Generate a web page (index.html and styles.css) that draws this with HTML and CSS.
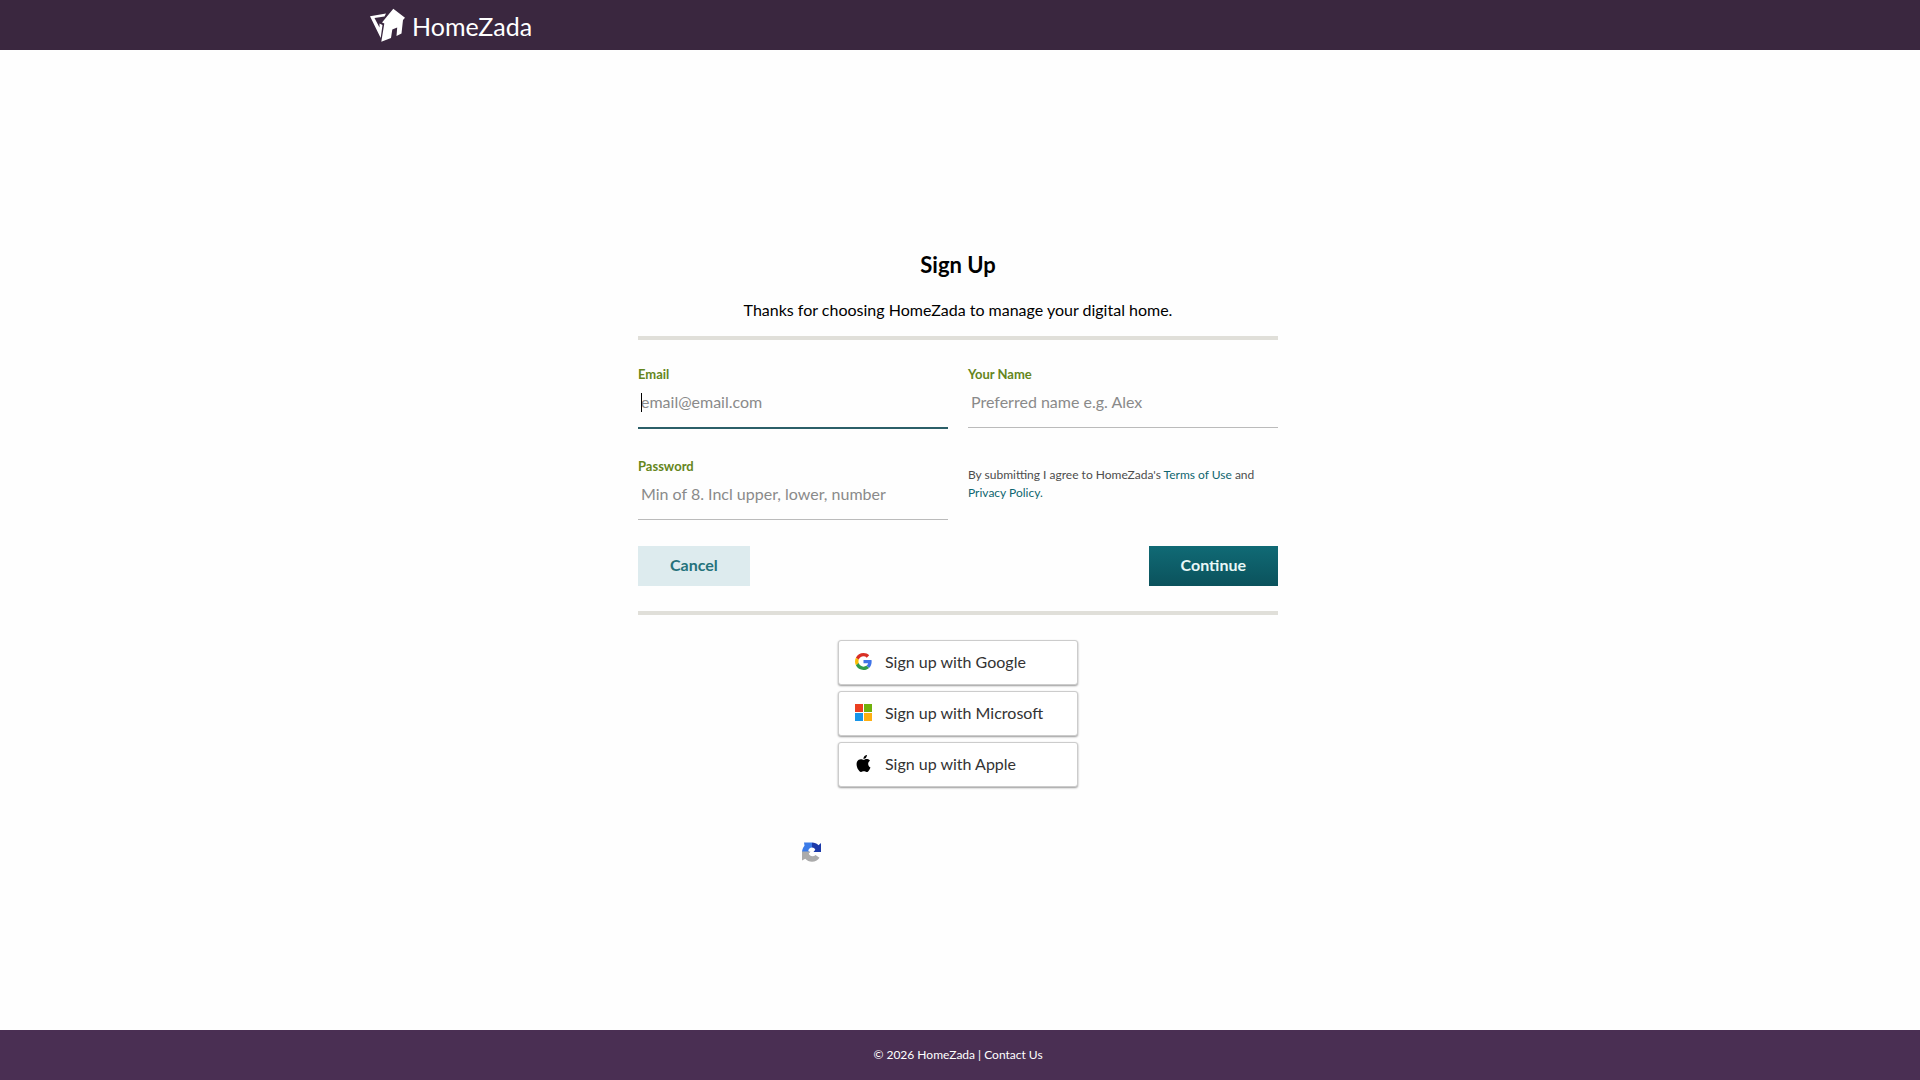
FILE: index.html
```html
<!DOCTYPE html>
<html lang="en">
<head>
    <meta charset="UTF-8">
    <meta name="viewport" content="width=device-width, initial-scale=1.0">
    <title>HomeZada - Sign Up</title>
    <link rel="stylesheet" href="styles.css">
</head>

<body>
    <header class="header">
        <a class="logo" href="#">
            <svg class="logo-mark" viewBox="0 0 36 34" aria-hidden="true">
                <path fill="#fff" d="M23.300 .7 L35 9.800 L33 12 L31.500 25.500 L26.500 28 L27.200 19.500 L22.300 21.500 L21 30 L11.300 33.800 L14.300 15.500 L12 14.500 Z"/>
                <path fill="#fff" d="M0 8.300 L16 5.500 L14.500 8.500 L4.500 10 L9.500 19.500 L9.500 15.500 L12.500 17 L10.700 30 Z"/>
            </svg>
            <span class="logo-text">HomeZada</span>
        </a>
    </header>

    <main class="main">
        <h1>Sign Up</h1>
        <p class="intro">Thanks for choosing HomeZada to manage your digital home.</p>

        <form id="signup-form" class="signup-form" action="#" method="POST">
            <div class="input-group">
                <label for="email">Email</label>
                <div class="input-box">
                    <input type="email" id="email" name="email" placeholder="email@email.com" autofocus>
                    <span class="caret"></span>
                </div>
            </div>

            <div class="input-group">
                <label for="name">Your Name</label>
                <input type="text" id="name" name="name" placeholder="Preferred name e.g. Alex">
            </div>

            <div class="input-group">
                <label for="password">Password</label>
                <input type="password" id="password" name="password" placeholder="Min of 8. Incl upper, lower, number">
            </div>

            <p class="terms">By submitting I agree to HomeZada's <a href="#">Terms of Use</a> and <a href="#">Privacy Policy.</a></p>

            <div class="button-container">
                <button type="button" class="cancel-button">Cancel</button>
                <button type="submit" class="submit-button">Continue</button>
            </div>
        </form>

        <div class="social">
            <button type="button" class="social-button">
                <svg viewBox="0 0 48 48" aria-hidden="true">
                    <path fill="#d93025" d="M24 9.5c3.54 0 6.71 1.22 9.21 3.6l6.85-6.85C35.9 2.38 30.47 0 24 0 14.62 0 6.51 5.38 2.56 13.22l7.98 6.19C12.43 13.72 17.74 9.5 24 9.5z"/>
                    <path fill="#3f74e8" d="M46.98 24.55c0-1.57-.15-3.09-.38-4.55H24v9.02h12.94c-.58 2.96-2.26 5.48-4.78 7.18l7.73 6c4.51-4.18 7.09-10.36 7.09-17.65z"/>
                    <path fill="#fbbc05" d="M10.53 28.59c-.48-1.45-.76-2.99-.76-4.59s.27-3.14.76-4.59l-7.98-6.19C.92 16.46 0 20.12 0 24c0 3.88.92 7.54 2.56 10.78l7.97-6.19z"/>
                    <path fill="#2f9b4b" d="M24 48c6.48 0 11.93-2.13 15.89-5.81l-7.73-6c-2.15 1.45-4.92 2.3-8.16 2.3-6.26 0-11.57-4.22-13.47-9.91l-7.98 6.19C6.51 42.62 14.62 48 24 48z"/>
                </svg>
                Sign up with Google
            </button>
            <button type="button" class="social-button">
                <svg viewBox="0 0 17 17" aria-hidden="true">
                    <path fill="#eb3f20" d="M0 0h8v8H0z"/>
                    <path fill="#70b10c" d="M9 0h8v8H9z"/>
                    <path fill="#1895e8" d="M0 9h8v8H0z"/>
                    <path fill="#fdaf12" d="M9 9h8v8H9z"/>
                </svg>
                Sign up with Microsoft
            </button>
            <button type="button" class="social-button">
                <svg viewBox="0 0 24 24" aria-hidden="true">
                    <path d="M12.15 6.9c-.95 0-2.42-1.08-3.96-1.04-2.04.03-3.91 1.18-4.96 3.01-2.12 3.68-.55 9.1 1.52 12.09 1.01 1.45 2.21 3.09 3.79 3.04 1.52-.07 2.09-.99 3.94-.99 1.83 0 2.35.99 3.96.95 1.64-.03 2.68-1.48 3.68-2.95 1.16-1.69 1.64-3.33 1.66-3.42-.04-.01-3.18-1.22-3.22-4.86-.03-3.04 2.48-4.49 2.6-4.56-1.43-2.09-3.62-2.32-4.39-2.38-2-.16-3.68 1.09-4.61 1.09zM15.53 3.83c.84-1.01 1.4-2.43 1.25-3.83-1.21.05-2.66.81-3.53 1.82-.78.9-1.45 2.34-1.27 3.71 1.34.1 2.72-.69 3.56-1.7"/>
                </svg>
                Sign up with Apple
            </button>
        </div>

        <!-- recaptcha badge -->
        <div class="captcha">
            <svg viewBox="0 0 20 20" aria-hidden="true">
                <path fill="#3b7be8" d="M2 .5h8v5C8 5.500 6.500 7 6.300 9L8 10.500H0C0 8 .8 5.500 2.500 3.700z"/>
                <path fill="#1c3aa9" d="M10 .5c2.600 0 4.800 1 6.500 2.700L19 1v9h-7.500l1.800-2.300C12.600 6.200 11.500 5.500 10 5.500z"/>
                <path fill="#ababab" d="M0 9.500h8.500L6.800 11.500c.6 1.800 1.800 2.700 3.700 2.700 1.200 0 2.200-.4 3-1.200l4 2.700c-1.800 2.400-4.400 4-7.500 4-2.700 0-5-1.100-6.700-3L0 18.500z"/>
            </svg>
        </div>
    </main>

    <footer class="footer">
        <p>© 2026 HomeZada | <a href="#">Contact Us</a></p>
    </footer>
</body>
</html>
```
FILE: styles.css
```css
* {
    box-sizing: border-box;
}

body {
    margin: 0;
    min-height: 100vh;
    display: flex;
    flex-direction: column;
    font-family: Lato, sans-serif;
    font-size: 16px;
    color: #000;
    background-color: #fefefe;
}

a {
    color: #0f6670;
    text-decoration: none;
}

.header {
    height: 50px;
    padding: 0 370px;
    display: flex;
    align-items: center;
    background-color: #3a273f;
}

.logo {
    display: flex;
    align-items: center;
    gap: 6px;
    color: #fff;
}

.logo-mark {
    width: 36px;
    height: 34px;
}

.logo-text {
    padding-top: 2px;
    font-size: 25px;
    font-weight: 400;
    line-height: 32px;
}

.main {
    flex: 1;
    width: 644px;
    max-width: 100%;
    margin: 0 auto;
    padding: 201px 4px 0 0;
}

h1 {
    margin: 0;
    font-size: 22px;
    line-height: 28px;
    text-align: center;
}

.intro {
    margin: 19px 0 0;
    padding-bottom: 14px;
    line-height: 24px;
    text-align: center;
    border-bottom: 4px solid #e0dfd9;
}

.signup-form {
    display: grid;
    grid-template-columns: 1fr 1fr;
    column-gap: 20px;
    row-gap: 26px;
    padding: 26px 0 25px;
    border-bottom: 4px solid #e0dfd9;
}

.input-group label {
    display: block;
    font-size: 13px;
    font-weight: bold;
    line-height: 16px;
    color: #65861c;
}

.input-group input {
    display: block;
    width: 100%;
    height: 46px;
    padding: 0 3px 6px;
    font-family: inherit;
    font-size: 16px;
    background: none;
    border: none;
    border-bottom: 1px solid #bbb;
    outline: none;
}

.input-group input::placeholder {
    color: #8a8a8a;
}

.input-group input:focus {
    height: 47px;
    border-bottom: 2px solid #2b5f68;
    caret-color: transparent;
}

.input-box {
    position: relative;
    height: 50px;
}

.caret {
    display: none;
    position: absolute;
    top: 11px;
    left: 3px;
    width: 1px;
    height: 19px;
    background-color: #000;
}

.input-group input:focus + .caret {
    display: block;
}

.terms {
    margin: 0;
    padding-top: 8px;
    font-size: 12px;
    line-height: 18px;
    color: #4d4d4d;
}

.button-container {
    grid-column: 1 / 3;
    display: flex;
    justify-content: space-between;
}

.cancel-button,
.submit-button {
    height: 40px;
    padding: 0 32px 3px;
    font-family: inherit;
    font-size: 16px;
    font-weight: bold;
    border: none;
    cursor: pointer;
}

.cancel-button {
    color: #25727b;
    background-color: #ddebee;
}

.submit-button {
    color: #e8f7f7;
    background: linear-gradient(#106a75, #0b525c);
}

.social {
    width: 240px;
    margin: 25px auto 0;
    display: flex;
    flex-direction: column;
    gap: 6px;
}

.social-button {
    display: flex;
    align-items: center;
    gap: 13px;
    height: 45px;
    padding: 0 16px 2px;
    font-family: inherit;
    font-size: 16px;
    color: #333;
    background-color: #fff;
    border: 1px solid #ccc;
    border-radius: 3px;
    box-shadow: 0 1px 2px rgba(0, 0, 0, 0.4);
    cursor: pointer;
}

.social-button svg {
    width: 17px;
    height: 17px;
}

.captcha {
    width: 312px;
    margin: 55px auto 0;
}

.captcha svg {
    display: block;
    width: 20px;
    height: 20px;
}

.footer {
    height: 50px;
    padding-right: 4px;
    font-size: 12px;
    text-align: center;
    color: #fff;
    background-color: #4a2f53;
}

.footer p {
    margin: 0;
    line-height: 50px;
}

.footer a {
    color: #fff;
}
```
